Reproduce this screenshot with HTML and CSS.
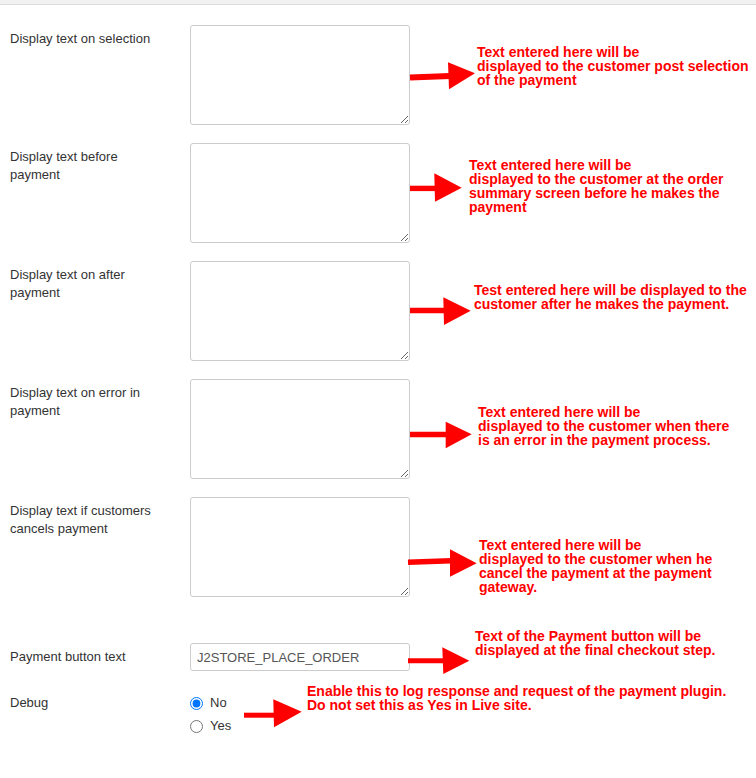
FILE: index.html
```html
<!DOCTYPE html>
<html lang="en">
<head>
<meta charset="utf-8">
<title>Payment plugin settings</title>
<link rel="stylesheet" href="styles.css">
</head>
<body>
<div class="topbar"></div>
<form class="form">
  <div class="row row-area">
    <label class="field-label">Display text on selection</label>
    <textarea class="textarea"></textarea>
    <div class="note">
      <svg class="arrow" width="67" height="100" viewBox="0 0 67 100"><line x1="0" y1="52.5" x2="40" y2="51" stroke="#ff0000" stroke-width="6"/><polygon points="38,37.3 39,64.3 65,48.3" fill="#ff0000"/></svg>
      <p class="note-text n1">Text entered here will be<br>displayed to the customer post selection<br>of the payment</p>
    </div>
  </div>
  <div class="row row-area">
    <label class="field-label">Display text before payment</label>
    <textarea class="textarea"></textarea>
    <div class="note">
      <svg class="arrow" width="59" height="100" viewBox="0 0 59 100"><line x1="0" y1="45.4" x2="26" y2="45.4" stroke="#ff0000" stroke-width="5.4"/><polygon points="24.3,30.3 25,58.7 51.7,44.7" fill="#ff0000"/></svg>
      <p class="note-text n2">Text entered here will be<br>displayed to the customer at the order<br>summary screen before he makes the<br>payment</p>
    </div>
  </div>
  <div class="row row-area">
    <label class="field-label">Display text on after payment</label>
    <textarea class="textarea"></textarea>
    <div class="note">
      <svg class="arrow" width="64" height="100" viewBox="0 0 64 100"><line x1="0" y1="49.5" x2="34" y2="49.5" stroke="#ff0000" stroke-width="5.6"/><polygon points="33.3,36.3 34,64 60.7,49.7" fill="#ff0000"/></svg>
      <p class="note-text n3">Test entered here will be displayed to the<br>customer after he makes the payment.</p>
    </div>
  </div>
  <div class="row row-area">
    <label class="field-label">Display text on error in payment</label>
    <textarea class="textarea"></textarea>
    <div class="note">
      <svg class="arrow" width="68" height="100" viewBox="0 0 68 100"><line x1="0" y1="55.5" x2="36" y2="55.5" stroke="#ff0000" stroke-width="5.6"/><polygon points="35.7,42.7 35.7,69.3 61.7,55.3" fill="#ff0000"/></svg>
      <p class="note-text n4">Text entered here will be<br>displayed to the customer when there<br>is an error in the payment process.</p>
    </div>
  </div>
  <div class="row row-area row-last-area">
    <label class="field-label">Display text if customers cancels payment</label>
    <textarea class="textarea"></textarea>
    <div class="note">
      <svg class="arrow" width="69" height="100" viewBox="0 0 69 100"><line x1="-2" y1="65.2" x2="41" y2="63.8" stroke="#ff0000" stroke-width="5.5"/><polygon points="40,52.3 40,79.7 66.7,66.3" fill="#ff0000"/></svg>
      <p class="note-text n5">Text entered here will be<br>displayed to the customer when he<br>cancel the payment at the payment<br>gateway.</p>
    </div>
  </div>
  <div class="row row-input">
    <label class="field-label">Payment button text</label>
    <input class="text-input" type="text" value="J2STORE_PLACE_ORDER">
    <div class="note">
      <svg class="arrow" width="65" height="28" viewBox="0 0 65 28"><line x1="-2" y1="17.8" x2="34" y2="17.8" stroke="#ff0000" stroke-width="5"/><polygon points="32.3,4.3 33.3,31 59.3,17.7" fill="#ff0000"/></svg>
      <p class="note-text n6">Text of the Payment button will be<br>displayed at the final checkout step.</p>
    </div>
  </div>
  <div class="row row-debug">
    <span class="field-label debug-label">Debug</span>
    <div class="debug-controls">
      <div class="radios">
        <label class="radio"><input type="radio" name="debug" checked>No</label>
        <label class="radio"><input type="radio" name="debug">Yes</label>
      </div>
      <div class="note">
        <svg class="arrow" width="63" height="34" viewBox="0 0 63 34"><line x1="0" y1="21.2" x2="30" y2="21.2" stroke="#ff0000" stroke-width="5"/><polygon points="29.3,5.3 30,33.3 57.7,17.7" fill="#ff0000"/></svg>
        <p class="note-text n7">Enable this to log response and request of the payment plugin.<br>Do not set this as Yes in Live site.</p>
      </div>
    </div>
  </div>
</form>
</body>
</html>
```

FILE: styles.css
```css
* {
  box-sizing: border-box;
}

html, body {
  margin: 0;
  padding: 0;
  background: #ffffff;
}

body {
  font-family: "Liberation Sans", Arial, sans-serif;
  font-size: 13px;
  color: #333333;
  width: 756px;
  height: 778px;
  overflow: hidden;
}

.topbar {
  height: 5px;
  background: #f1f1f1;
  border-bottom: 1px solid #dddddd;
}

.form {
  display: flex;
  flex-direction: column;
  padding: 20px 0 0 10px;
  margin: 0;
}

.row {
  display: grid;
  grid-template-columns: 180px 220px auto;
  align-items: start;
}

.row-area {
  margin-bottom: 18px;
}

.row-last-area {
  margin-bottom: 46px;
}

.row-input {
  margin-bottom: 23px;
}

.field-label {
  display: block;
  max-width: 150px;
  padding-top: 5px;
  line-height: 18px;
  font-size: 13px;
  color: #333333;
}

.debug-label {
  padding-top: 0;
}

.textarea {
  display: block;
  width: 220px;
  height: 100px;
  margin: 0;
  padding: 4px 6px;
  border: 1px solid #cccccc;
  border-radius: 3px;
  font: 13px/18px "Liberation Sans", Arial, sans-serif;
  color: #555555;
  background: #ffffff;
}

.text-input {
  display: block;
  width: 220px;
  height: 28px;
  margin: 0;
  padding: 4px 6px;
  border: 1px solid #cccccc;
  border-radius: 3px;
  font: 13px/18px "Liberation Sans", Arial, sans-serif;
  color: #555555;
  background: #ffffff;
}

.note {
  display: flex;
  align-items: flex-start;
}

.arrow {
  display: block;
  flex: none;
  overflow: visible;
}

.note-text {
  margin: 0;
  font: bold 14px/14px "Liberation Sans", Arial, sans-serif;
  color: #ff0000;
  white-space: nowrap;
}

.n1 { margin-top: 20px; }
.n2 { margin-top: 15px; }
.n3 { margin-top: 22px; }
.n4 { margin-top: 26px; }
.n5 { margin-top: 41px; }
.n6 { margin-top: -14px; }
.n7 { margin-top: -10px; }

.debug-controls {
  grid-column: 2 / 4;
  display: flex;
  align-items: flex-start;
}

.radios {
  width: 54px;
  flex: none;
  display: flex;
  flex-direction: column;
}

.radio {
  display: flex;
  align-items: center;
  line-height: 18px;
  margin-bottom: 5px;
  font-size: 13px;
  color: #333333;
}

.radio input {
  width: 13px;
  height: 13px;
  margin: 1px 7px 0 0;
  flex: none;
}
```
